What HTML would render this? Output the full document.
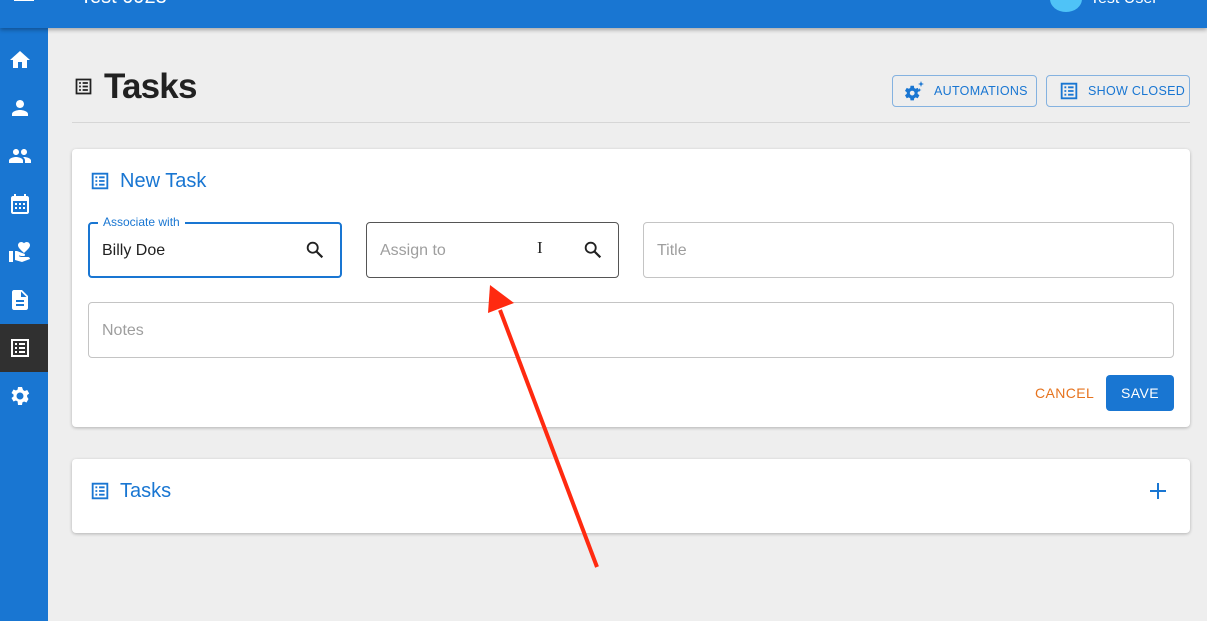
<!DOCTYPE html>
<html><head><style>
*{box-sizing:border-box;margin:0;padding:0}
body{width:1207px;height:621px;overflow:hidden;background:#eeeeee;font-family:"Liberation Sans",sans-serif;position:relative}
.top{position:absolute;left:0;top:0;width:1207px;height:28px;background:#1976d2;box-shadow:0 2px 4px rgba(0,0,0,.3);z-index:3;overflow:hidden}
.side{position:absolute;left:0;top:28px;width:48px;height:593px;background:#1976d2}
.ic{position:absolute;left:8px}
.card{position:absolute;background:#fff;border-radius:4px;box-shadow:0 1px 3px rgba(0,0,0,.25)}
.fld{position:absolute;border:1px solid #c4c4c4;border-radius:4px;height:56px;font-size:16px;color:#9e9e9e;padding:19px 13px}
.btn{position:absolute;top:75px;height:32px;border:1px solid rgba(25,118,210,.5);border-radius:4px;color:#1976d2;font-size:12.5px;letter-spacing:.3px;display:flex;align-items:center;white-space:nowrap}
</style></head><body>
<div class="top">
<div style="position:absolute;left:14px;top:-2px;width:20px;height:3px;background:#fff"></div>
<div style="position:absolute;left:80px;top:-14px;color:#fff;font-size:20px">Test 0923</div>
<div style="position:absolute;left:1050px;top:-14px;width:32px;height:26px;border-radius:50%;background:#4fc3f7"></div>
<div style="position:absolute;left:1090px;top:-10px;color:#fff;font-size:16px">Test User</div>
</div>
<div class="side">
<svg class="ic" style="top:20px" width="24" height="24" viewBox="0 0 24 24" fill="#fff"><path d="M10 20v-6h4v6h5v-8h3L12 3 2 12h3v8z"/></svg>
<svg class="ic" style="top:68px" width="24" height="24" viewBox="0 0 24 24" fill="#fff"><path d="M12 12c2.2 0 4-1.8 4-4s-1.8-4-4-4-4 1.8-4 4 1.8 4 4 4zm0 2c-2.7 0-8 1.3-8 4v2h16v-2c0-2.7-5.3-4-8-4z"/></svg>
<svg class="ic" style="top:116px" width="24" height="24" viewBox="0 0 24 24" fill="#fff"><path d="M16 11c1.7 0 3-1.3 3-3s-1.3-3-3-3-3 1.3-3 3 1.3 3 3 3zm-8 0c1.7 0 3-1.3 3-3S9.7 5 8 5 5 6.3 5 8s1.3 3 3 3zm0 2c-2.3 0-7 1.2-7 3.5V19h14v-2.5C15 14.2 10.3 13 8 13zm8 0c-.3 0-.6 0-1 .1 1.2.8 2 2 2 3.4V19h6v-2.5c0-2.3-4.7-3.5-7-3.5z"/></svg>
<svg class="ic" style="top:164px" width="24" height="24" viewBox="0 0 24 24" fill="#fff"><path d="M19 4h-1V2h-2v2H8V2H6v2H5C3.9 4 3 4.9 3 6v14c0 1.1.9 2 2 2h14c1.1 0 2-.9 2-2V6c0-1.1-.9-2-2-2zm0 16H5V9h14zM7 11h2v2H7zm4 0h2v2h-2zm4 0h2v2h-2zm-8 4h2v2H7zm4 0h2v2h-2zm4 0h2v2h-2z"/></svg>
<svg class="ic" style="top:212px" width="24" height="24" viewBox="0 0 24 24" fill="#fff"><path d="M1 11h4v11H1zm15-7.75C16.65 2.49 17.66 2 18.7 2 20.55 2 22 3.45 22 5.3c0 2.27-2.91 4.9-6 7.7-3.09-2.81-6-5.44-6-7.7C10 3.45 11.45 2 13.3 2c1.04 0 2.05.49 2.7 1.25zM20 17h-7l-2.09-.73.33-.94L13 16h2.82c.65 0 1.18-.53 1.18-1.18 0-.49-.31-.93-.77-1.11L8.97 11H7v9.02L14 22l8-3c-.01-1.1-.89-2-2-2z"/></svg>
<svg class="ic" style="top:260px" width="24" height="24" viewBox="0 0 24 24" fill="#fff"><path d="M14 2H6c-1.1 0-2 .9-2 2v16c0 1.1.9 2 2 2h12c1.1 0 2-.9 2-2V8zm2 16H8v-2h8zm0-4H8v-2h8zm-3-5V3.5L18.5 9z"/></svg>
<div style="position:absolute;left:0;top:296px;width:48px;height:48px;background:#303030"></div>
<svg class="ic" style="top:308px" width="24" height="24" viewBox="0 0 24 24" fill="#fff"><path d="M3 3v18h18V3zm16 16H5V5h14zM7 7h2v2H7zm4 0h6v2h-6zm-4 4h2v2H7zm4 0h6v2h-6zm-4 4h2v2H7zm4 0h6v2h-6z"/></svg>
<svg class="ic" style="top:356px" width="24" height="24" viewBox="0 0 24 24" fill="#fff"><path fill-rule="evenodd" d="M19.1 12.9a7 7 0 0 0 0-1.8l2.1-1.6-2-3.5-2.5 1a7 7 0 0 0-1.6-.9L14 3h-4l-.4 2.6c-.6.2-1.1.5-1.6.9l-2.5-1-2 3.5 2.1 1.6a7 7 0 0 0 0 1.8l-2.1 1.6 2 3.5 2.5-1c.5.4 1 .7 1.6.9L10 21h4l.4-2.6c.6-.2 1.1-.5 1.6-.9l2.5 1 2-3.5zM12 15.5a3.5 3.5 0 1 1 0-7 3.5 3.5 0 0 1 0 7z"/></svg>
</div>

<svg style="position:absolute;left:73px;top:76px" width="21" height="21" viewBox="0 0 24 24" fill="#212121"><path d="M3 3v18h18V3zm16 16H5V5h14zM7 7h2v2H7zm4 0h6v2h-6zm-4 4h2v2H7zm4 0h6v2h-6zm-4 4h2v2H7zm4 0h6v2h-6z"/></svg>
<div style="position:absolute;left:104px;top:67px;font-size:35px;color:#212121;font-weight:bold;letter-spacing:-0.8px">Tasks</div>
<div style="position:absolute;left:72px;top:122px;width:1118px;height:1px;background:#d6d6d6"></div>

<div class="btn" style="left:892px;width:145px"><svg style="margin-left:9px" width="24" height="24" viewBox="0 0 24 24" fill="#1976d2"><path fill-rule="evenodd" d="M15.6 14.9a6 6 0 0 0 0-1.6l1.8-1.4-1.7-3-2.1.9a6 6 0 0 0-1.4-.8L11.9 6.8h-3.4l-.3 2.2c-.5.2-1 .5-1.4.8l-2.1-.9-1.7 3 1.8 1.4a6 6 0 0 0 0 1.6l-1.8 1.4 1.7 3 2.1-.9c.4.3.9.6 1.4.8l.3 2.2h3.4l.3-2.2c.5-.2 1-.5 1.4-.8l2.1.9 1.7-3zM10.2 16.5a2.4 2.4 0 1 1 0-4.8 2.4 2.4 0 0 1 0 4.8z"/><path d="M19 2l.8 2.2L22 5l-2.2.8L19 8l-.8-2.2L16 5l2.2-.8zm-1.5 7l.5 1.5 1.5.5-1.5.5-.5 1.5-.5-1.5-1.5-.5 1.5-.5z"/></svg><span style="margin-left:8px">AUTOMATIONS</span></div>
<div class="btn" style="left:1046px;width:144px"><svg style="margin-left:11px" width="22" height="22" viewBox="0 0 24 24" fill="#1976d2"><path d="M3 3v18h18V3zm16 16H5V5h14zM7 7h2v2H7zm4 0h6v2h-6zm-4 4h2v2H7zm4 0h6v2h-6zm-4 4h2v2H7zm4 0h6v2h-6z"/></svg><span style="margin-left:8px">SHOW CLOSED</span></div>

<div class="card" style="left:72px;top:149px;width:1118px;height:278px">
<svg style="position:absolute;left:17px;top:21px" width="22" height="22" viewBox="0 0 24 24" fill="#1976d2"><path d="M3 3v18h18V3zm16 16H5V5h14zM7 7h2v2H7zm4 0h6v2h-6zm-4 4h2v2H7zm4 0h6v2h-6zm-4 4h2v2H7zm4 0h6v2h-6z"/></svg>
<div style="position:absolute;left:48px;top:21px;font-size:20px;color:#1976d2">New Task</div>
<div class="fld" style="left:16px;top:73px;width:254px;border:2px solid #1976d2;color:#212121;padding:18px 12px">Billy Doe</div>
<div style="position:absolute;left:26px;top:66px;background:#fff;padding:0 5px;font-size:12px;color:#1976d2">Associate with</div>
<svg style="position:absolute;left:232px;top:90px" width="22" height="22" viewBox="0 0 24 24" fill="none" stroke="#212121" stroke-width="2"><circle cx="9.5" cy="9.5" r="5.5"/><path d="M13.5 13.5L20 20" stroke-width="2.4"/></svg>
<div class="fld" style="left:294px;top:73px;width:253px;border-color:#555">Assign to</div>
<div style="position:absolute;left:465px;top:89px;font-size:17px;color:#222;font-family:'Liberation Serif',serif">I</div>
<svg style="position:absolute;left:510px;top:90px" width="22" height="22" viewBox="0 0 24 24" fill="none" stroke="#212121" stroke-width="2"><circle cx="9.5" cy="9.5" r="5.5"/><path d="M13.5 13.5L20 20" stroke-width="2.4"/></svg>
<div class="fld" style="left:571px;top:73px;width:531px">Title</div>
<div class="fld" style="left:16px;top:153px;width:1086px">Notes</div>
<div style="position:absolute;left:963px;top:236px;font-size:14px;color:#e6731e;letter-spacing:.4px">CANCEL</div>
<div style="position:absolute;left:1034px;top:226px;width:68px;height:36px;background:#1976d2;border-radius:4px;color:#fff;font-size:14px;text-align:center;line-height:36px;letter-spacing:.4px">SAVE</div>
</div>

<div class="card" style="left:72px;top:459px;width:1118px;height:74px">
<svg style="position:absolute;left:17px;top:21px" width="22" height="22" viewBox="0 0 24 24" fill="#1976d2"><path d="M3 3v18h18V3zm16 16H5V5h14zM7 7h2v2H7zm4 0h6v2h-6zm-4 4h2v2H7zm4 0h6v2h-6zm-4 4h2v2H7zm4 0h6v2h-6z"/></svg>
<div style="position:absolute;left:48px;top:21px;font-size:20px;color:#1976d2">Tasks</div>
<div style="position:absolute;left:1078px;top:31px;width:16px;height:2px;background:#1976d2"></div>
<div style="position:absolute;left:1085px;top:24px;width:2px;height:16px;background:#1976d2"></div>
</div>

<svg style="position:absolute;left:0;top:0" width="1207" height="621"><line x1="597" y1="567" x2="500" y2="310" stroke="#ff2a10" stroke-width="4"/><polygon points="490,285 514,303 488,313" fill="#ff2a10"/></svg>
</body></html>
